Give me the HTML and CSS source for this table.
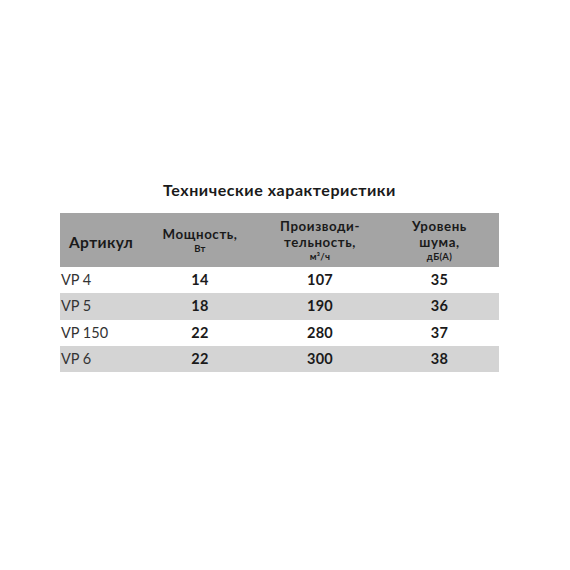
FILE: index.html
```html
<!DOCTYPE html>
<html lang="ru">
<head>
<meta charset="utf-8">
<link rel="stylesheet" href="styles.css">
</head>
<body>
<div class="page">
  <div class="block">
    <h1 class="title">Технические характеристики</h1>
    <table class="spec">
      <colgroup>
        <col class="w-art">
        <col class="w-col">
        <col class="w-col">
        <col class="w-last">
      </colgroup>
      <thead>
        <tr>
          <th class="c-art">Артикул</th>
          <th>Мощность,<span class="unit">Вт</span></th>
          <th>Производи-<br>тельность,<span class="unit">м³/ч</span></th>
          <th>Уровень<br>шума,<span class="unit">дБ(А)</span></th>
        </tr>
      </thead>
      <tbody>
        <tr><td class="c-art">VP 4</td><td>14</td><td>107</td><td>35</td></tr>
        <tr class="alt"><td class="c-art">VP 5</td><td>18</td><td>190</td><td>36</td></tr>
        <tr><td class="c-art">VP 150</td><td>22</td><td>280</td><td>37</td></tr>
        <tr class="alt"><td class="c-art">VP 6</td><td>22</td><td>300</td><td>38</td></tr>
      </tbody>
    </table>
  </div>
</div>
</body>
</html>
```
FILE: styles.css
```css
html, body {
  margin: 0;
  padding: 0;
  background: #ffffff;
}
body {
  font-family: Lato, "Open Sans", "Liberation Sans", sans-serif;
  color: #1a1a1a;
}
.page {
  width: 570px;
  height: 570px;
  padding-top: 179px;
  box-sizing: border-box;
}
.block {
  margin-left: 60px;
  width: 439px;
}
.title {
  margin: 0 0 12px 0;
  text-align: center;
  font-size: 16px;
  font-weight: 700;
  letter-spacing: 0.55px;
  line-height: 22px;
}
.spec {
  width: 439px;
  border-collapse: collapse;
  table-layout: fixed;
}
.w-art { width: 80px; }
.w-col { width: 120px; }
.w-last { width: 119px; }
.spec th, .spec td {
  padding: 0;
  text-align: center;
  box-sizing: border-box;
}
.spec thead tr {
  background: #a4a4a4;
  height: 54px;
}
.spec th {
  font-size: 13.3px;
  font-weight: 700;
  letter-spacing: 0.6px;
  line-height: 16px;
  vertical-align: middle;
}
.spec th.c-art {
  text-align: left;
  padding-left: 9px;
  font-size: 15.5px;
  letter-spacing: 0.4px;
  padding-top: 4px;
}
.unit {
  display: block;
  font-size: 9.5px;
  letter-spacing: 0.3px;
  line-height: 11px;
  padding-top: 1px;
}
.spec tbody tr {
  height: 26.3px;
}
.spec tbody tr.alt {
  background: #d4d4d4;
}
.spec td {
  font-size: 14.5px;
  font-weight: 700;
  letter-spacing: 0.3px;
  line-height: 18px;
}
.spec td.c-art {
  text-align: left;
  padding-left: 1px;
  font-weight: 400;
  letter-spacing: 0;
  color: #333333;
}
```
